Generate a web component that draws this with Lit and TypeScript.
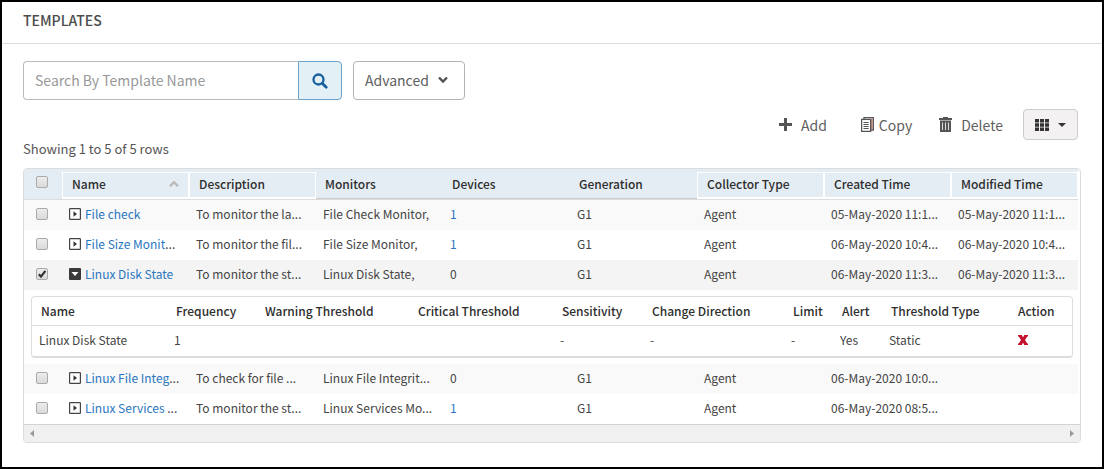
import { LitElement, html, css, nothing } from "lit";
import { customElement, state } from "lit/decorators.js";
import { classMap } from "lit/directives/class-map.js";

interface Template {
  name: string;
  description: string;
  monitors: string;
  devices: number;
  created: string;
  modified: string;
}

const TEMPLATES: Template[] = [
  { name: "File check", description: "To monitor the la...", monitors: "File Check Monitor,", devices: 1, created: "05-May-2020 11:1...", modified: "05-May-2020 11:1..." },
  { name: "File Size Monit...", description: "To monitor the fil...", monitors: "File Size Monitor,", devices: 1, created: "06-May-2020 10:4...", modified: "06-May-2020 10:4..." },
  { name: "Linux Disk State", description: "To monitor the st...", monitors: "Linux Disk State,", devices: 0, created: "06-May-2020 11:3...", modified: "06-May-2020 11:3..." },
  { name: "Linux File Integ...", description: "To check for file ...", monitors: "Linux File Integrit...", devices: 0, created: "06-May-2020 10:0...", modified: "" },
  { name: "Linux Services ...", description: "To monitor the st...", monitors: "Linux Services Mo...", devices: 1, created: "06-May-2020 08:5...", modified: "" },
];

const COLUMNS = [
  { label: "Name", sortable: true },
  { label: "Description", sortable: true },
  { label: "Monitors", sortable: false },
  { label: "Devices", sortable: false },
  { label: "Generation", sortable: false },
  { label: "Collector Type", sortable: true },
  { label: "Created Time", sortable: true },
  { label: "Modified Time", sortable: true },
];

const DETAIL_COLUMNS = [
  ["Name", "c-name"],
  ["Frequency", "c-freq"],
  ["Warning Threshold", "c-warn"],
  ["Critical Threshold", "c-crit"],
  ["Sensitivity", "c-sens"],
  ["Change Direction", "c-dir"],
  ["Limit", "c-small"],
  ["Alert", "c-small"],
  ["Threshold Type", "c-type"],
  ["Action", "c-action"],
];

@customElement("app-root")
export class AppRoot extends LitElement {
  @state() private open = 2;

  static styles = css`
    :host {
      display: block;
      font-family: "Noto Sans CJK SC", "Open Sans", sans-serif;
      font-size: 13px;
      line-height: 20px;
      color: #444;
    }
    * { box-sizing: border-box; }
    button, input {
      font: inherit;
      color: inherit;
      margin: 0;
    }
    button {
      padding: 0;
      border: 0;
      background: none;
      cursor: pointer;
    }
    svg { display: block; flex: none; }
    a { color: #2a76c0; text-decoration: none; }
    .page {
      min-height: 100vh;
      border: 2px solid #000;
      background: #fff;
    }
    .title {
      margin: 0;
      padding: 8px 21px 13px;
      border-bottom: 1px solid #ddd;
      font-size: 14px;
      line-height: 20px;
      font-weight: 500;
      color: #4c4c4c;
    }
    .content { padding: 17px 21px 20px; }
    .filters { display: flex; gap: 11px; }
    .search { display: flex; width: 319px; }
    .search input {
      flex: 1;
      min-width: 0;
      height: 39px;
      padding: 0 11px 2px;
      border: 1px solid #bbb;
      border-right: 0;
      border-radius: 4px 0 0 4px;
      font-size: 14px;
      outline: none;
    }
    .search input::placeholder { color: #999; opacity: 1; }
    .search button {
      display: flex;
      align-items: center;
      justify-content: center;
      width: 44px;
      border: 1px solid #6ba3cc;
      border-radius: 0 4px 4px 0;
      background: #e3f0f6;
      color: #15609c;
    }
    .advanced {
      display: flex;
      align-items: center;
      gap: 9px;
      width: 112px;
      height: 39px;
      padding: 0 11px 2px;
      border: 1px solid #b3b3b3;
      border-radius: 4px;
      font-size: 14px;
      color: #5e5e5e;
    }
    .actions {
      display: flex;
      justify-content: flex-end;
      align-items: center;
      margin: 9px 3px 0 0;
      font-size: 14px;
      color: #606060;
    }
    .actions button { display: flex; align-items: center; }
    .add { gap: 9px; margin-right: 34px; }
    .copy { gap: 5px; margin-right: 27px; }
    .delete { gap: 9px; margin-right: 20px; }
    .actions .columns {
      justify-content: center;
      gap: 9px;
      width: 55px;
      height: 31px;
      border: 1px solid #ccc;
      border-radius: 4px;
      background: #f3f1f2;
      color: #333;
    }
    .summary { margin: 0 0 11px; line-height: 17px; color: #555; }
    .grid {
      border: 1px solid #dcdcdc;
      border-radius: 4px;
      overflow: hidden;
      font-size: 12px;
      line-height: 18px;
    }
    .rows { padding-right: 2px; }
    table {
      width: 100%;
      table-layout: fixed;
      border-collapse: separate;
      border-spacing: 0;
    }
    th, td {
      text-align: left;
      white-space: nowrap;
      overflow: hidden;
      text-overflow: ellipsis;
    }
    th { font-weight: 500; color: #2e2e2e; }
    .main > thead > tr > th {
      height: 31px;
      padding: 0;
      border-bottom: 1px solid #ddd;
      background: #e4edf3;
    }
    .main > thead > tr > .pick {
      width: 38px;
      padding: 0 12px 5px;
    }
    .label {
      display: flex;
      align-items: center;
      justify-content: space-between;
      height: 30px;
      padding: 0 9px;
      border-bottom: 1px solid #ccc;
    }
    .label.sortable {
      height: 27px;
      margin-top: 2px;
      padding: 0 9px 2px;
      border: 1px solid #fff;
    }
    .main > thead > tr > .boxed {
      background: linear-gradient(#e4edf3 28px, #fff 28px);
    }
    .main > tbody > tr > td { height: 30px; padding: 0 7px 2px; }
    .main > tbody > tr > .pick { padding: 0 12px 2px; }
    .main > tbody > .stripe > td { background: #f9f9f9; }
    .main > tbody > .open > td { background: #f4f4f4; }
    .main > tbody > tr > .detail-cell { padding: 6px 5px 6px 7px; }
    .pick input {
      appearance: none;
      display: block;
      width: 12px;
      height: 12px;
      border: 1px solid #aaa;
      border-radius: 2px;
      background: linear-gradient(#ececec, #dadada);
    }
    .pick input:checked {
      background: url('data:image/svg+xml,<svg xmlns="http://www.w3.org/2000/svg" viewBox="0 0 10 10"><path d="M1.8 5.2L4 7.6L8.4 1.8" fill="none" stroke="%23333" stroke-width="2.2"/></svg>') center / 10px 10px, linear-gradient(#ececec, #dadada);
    }
    .toggle { margin-right: 4px; vertical-align: middle; }
    .toggle svg { margin-bottom: 3px; }
    .detail {
      border: 1px solid #ddd;
      border-bottom-width: 2px;
      border-radius: 4px;
    }
    .detail th {
      height: 29px;
      padding: 0 0 1px 9px;
      border-bottom: 1px solid #ddd;
    }
    .detail td { height: 30px; padding: 0 0 2px 7px; }
    .detail .c-freq { width: 89px; }
    .detail .c-warn { width: 153px; }
    .detail .c-crit { width: 144px; }
    .detail .c-sens { width: 90px; }
    .detail .c-dir { width: 141px; }
    .detail .c-small { width: 49px; }
    .detail .c-type { width: 127px; }
    .detail .c-action { width: 63px; }
    .detail button { display: block; padding-left: 2px; }
    .scroll {
      display: flex;
      align-items: center;
      justify-content: space-between;
      height: 18px;
      padding: 0 6px;
      border-top: 1px solid #d4d4d4;
      background: #f0f0f0;
      color: #9b9b9b;
    }
  `;

  private renderDetail() {
    return html`<tr>
      <td class="detail-cell" colspan="9">
        <div class="detail">
          <table>
            <thead>
              <tr>${DETAIL_COLUMNS.map(([label, cls]) => html`<th class=${cls}>${label}</th>`)}</tr>
            </thead>
            <tbody>
              <tr>
                <td>Linux Disk State</td><td>1</td><td></td><td></td>
                <td>-</td><td>-</td><td>-</td><td>Yes</td><td>Static</td>
                <td>
                  <button aria-label="Remove monitor">
                    <svg width="10" height="10" viewBox="0 0 10 10" fill="#c4122f"><path d="M0 0h3.800L5 2.600 6.200 0H10v1.500H9.200L7 5l2.200 3.500h.8V10H6.200L5 7.400 3.800 10H0V8.500h.8L3 5 .8 1.500H0z"/></svg>
                  </button>
                </td>
              </tr>
            </tbody>
          </table>
        </div>
      </td>
    </tr>`;
  }

  private renderToggle(t: Template, i: number) {
    const open = i === this.open;
    return html`<button class="toggle" aria-expanded=${open} aria-label="Details of ${t.name}"
      @click=${() => (this.open = open ? -1 : i)}>
      ${open
        ? html`<svg width="12" height="12" viewBox="0 0 12 12"><rect width="12" height="12" rx="1" fill="#3a3a3a"/><path d="M2.500 4h7L6 8z" fill="#fff"/></svg>`
        : html`<svg width="12" height="12" viewBox="0 0 12 12"><rect x=".6" y=".6" width="10.800" height="10.800" rx=".6" fill="#fff" stroke="#444" stroke-width="1.200"/><path d="M4.500 3.200v5.600L8 6z" fill="#333"/></svg>`}
    </button>`;
  }

  private renderName(name: string) {
    const cut = name.endsWith("...");
    return html`<a href="#">${cut ? name.slice(0, -3) : name}</a>${cut ? "..." : nothing}`;
  }

  private renderRow(t: Template, i: number) {
    const open = i === this.open;
    return html`<tr class=${classMap({ open, stripe: !open && (i === 0 || i === 3) })}>
        <td class="pick"><input type="checkbox" aria-label="Select ${t.name}" ?checked=${i === 2} /></td>
        <td>${this.renderToggle(t, i)}${this.renderName(t.name)}</td>
        <td>${t.description}</td>
        <td>${t.monitors}</td>
        <td>${t.devices ? html`<a href="#">${t.devices}</a>` : t.devices}</td>
        <td>G1</td>
        <td>Agent</td>
        <td>${t.created}</td>
        <td>${t.modified}</td>
      </tr>
      ${open ? this.renderDetail() : nothing}`;
  }

  render() {
    return html`<main class="page">
      <h1 class="title">TEMPLATES</h1>
      <div class="content">
        <div class="filters">
          <form class="search" @submit=${(e: Event) => e.preventDefault()}>
            <input type="text" aria-label="Search By Template Name" placeholder="Search By Template Name" />
            <button aria-label="Search">
              <svg width="16" height="16" viewBox="0 0 16 16" fill="none" stroke="currentColor"><circle cx="6.500" cy="6.500" r="5" stroke-width="2.300"/><path d="M10.200 10.200l4 4" stroke-width="2.800" stroke-linecap="round"/></svg>
            </button>
          </form>
          <button class="advanced">Advanced
            <svg width="10" height="8" viewBox="0 0 10 8" fill="none" stroke="#505050" stroke-width="2.400"><path d="M1 1.500l4 4 4-4"/></svg>
          </button>
        </div>
        <div class="actions">
          <button class="add">
            <svg width="13" height="13" viewBox="0 0 13 13" fill="#555"><path d="M5 0h3v5h5v3H8v5H5V8H0V5h5z"/></svg>Add
          </button>
          <button class="copy">
            <svg width="13" height="15" viewBox="0 0 13 15" fill="none"><path d="M3 2V.7h9.300V13H10" stroke="#555" stroke-width="1.300"/><path d="M10.900 1.500v11" stroke="#c07f70" stroke-width="1.500"/><rect x=".6" y="2.400" width="9" height="12" fill="#fff" stroke="#555" stroke-width="1.300"/><path d="M2.500 5.500h5.200M2.500 7.500h5.200M2.500 9.500h5.200M2.500 11.500h5.200" stroke="#555"/></svg>Copy
          </button>
          <button class="delete">
            <svg width="13" height="15" viewBox="0 0 13 15" fill="#555"><path d="M4 0h5v1h4v2H0V1h4z"/><path fill-rule="evenodd" d="M1 3.500h11V15H1zM3.200 5.500v7.500h.8V5.500zM6.100 5.500v7.500h.8V5.500zM9 5.500v7.500h.8V5.500z"/></svg>Delete
          </button>
          <button class="columns" aria-label="Columns">
            <svg width="14" height="12" viewBox="0 0 14 12" fill="currentColor"><path d="M0 0h4v3.400H0zM5 0h4v3.400H5zM10 0h4v3.400h-4zM0 4.300h4v3.400H0zM5 4.300h4v3.400H5zM10 4.300h4v3.400h-4zM0 8.600h4v3.400H0zM5 8.600h4v3.400H5zM10 8.600h4v3.400h-4z"/></svg>
            <svg width="8" height="4" viewBox="0 0 8 4" fill="currentColor"><path d="M0 0h8L4 4z"/></svg>
          </button>
        </div>
        <p class="summary">Showing 1 to 5 of 5 rows</p>
        <div class="grid">
          <div class="rows">
            <table class="main">
              <thead>
                <tr>
                  <th class="pick"><input type="checkbox" aria-label="Select all" /></th>
                  ${COLUMNS.map((c, i) => html`<th class=${classMap({ boxed: c.sortable })}>
                    <div class=${classMap({ label: true, sortable: c.sortable })}>${c.label}
                      ${i === 0 ? html`<svg width="10" height="6" viewBox="0 0 10 6" fill="none" stroke="#bbb" stroke-width="2.400"><path d="M1 5.200l4-4 4 4"/></svg>` : nothing}
                    </div>
                  </th>`)}
                </tr>
              </thead>
              <tbody>${TEMPLATES.map((t, i) => this.renderRow(t, i))}</tbody>
            </table>
          </div>
          <div class="scroll">
            <svg width="4" height="7" viewBox="0 0 4 7" fill="currentColor"><path d="M4 0v7L0 3.500z"/></svg>
            <svg width="4" height="7" viewBox="0 0 4 7" fill="currentColor"><path d="M0 0v7l4-3.500z"/></svg>
          </div>
        </div>
      </div>
    </main>`;
  }
}
